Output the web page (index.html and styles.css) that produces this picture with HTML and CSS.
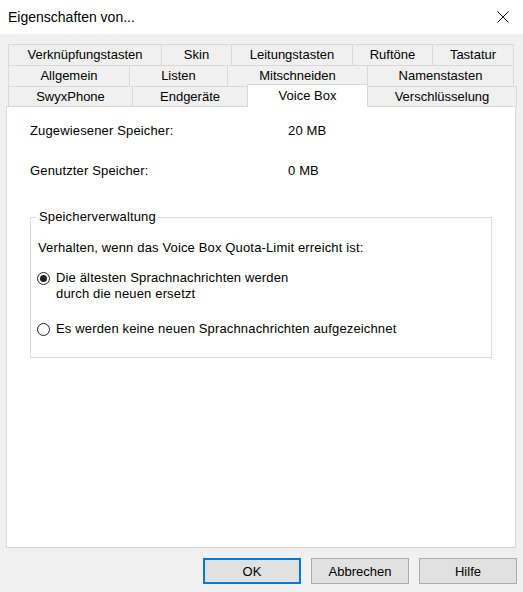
FILE: index.html
```html
<!DOCTYPE html>
<html lang="de">
<head>
    <meta charset="UTF-8">
    <meta name="viewport" content="width=device-width, initial-scale=1.0">
    <title>Eigenschaften von...</title>
    <link rel="stylesheet" href="styles.css">
</head>
<body>

<div class="titlebar">
    <span class="title">Eigenschaften von...</span>
    <svg class="close" width="12" height="12" viewBox="0 0 12 12">
        <path d="M0.5 0.5 L11.5 11.5 M11.5 0.5 L0.5 11.5" stroke="#000" stroke-width="1" fill="none"/>
    </svg>
</div>

<div class="tabs">
    <div class="tab-row row-1">
        <div class="tab">Verknüpfungstasten</div>
        <div class="tab">Skin</div>
        <div class="tab">Leitungstasten</div>
        <div class="tab">Ruftöne</div>
        <div class="tab">Tastatur</div>
    </div>
    <div class="tab-row row-2">
        <div class="tab">Allgemein</div>
        <div class="tab">Listen</div>
        <div class="tab">Mitschneiden</div>
        <div class="tab">Namenstasten</div>
    </div>
    <div class="tab-row row-3">
        <div class="tab">SwyxPhone</div>
        <div class="tab">Endgeräte</div>
        <div class="tab active">Voice Box</div>
        <div class="tab">Verschlüsselung</div>
    </div>
</div>

<div class="panel">
    <div class="info">
        <span>Zugewiesener Speicher:</span>
        <span>20 MB</span>
    </div>
    <div class="info second">
        <span>Genutzter Speicher:</span>
        <span>0 MB</span>
    </div>

    <fieldset class="group">
        <legend>Speicherverwaltung</legend>
        <div class="group-body">
            <p class="hint">Verhalten, wenn das Voice Box Quota-Limit erreicht ist:</p>
            <label class="radio first">
                <span class="dot checked"></span>
                <span>Die ältesten Sprachnachrichten werden<br>durch die neuen ersetzt</span>
            </label>
            <label class="radio">
                <span class="dot"></span>
                <span>Es werden keine neuen Sprachnachrichten aufgezeichnet</span>
            </label>
        </div>
    </fieldset>
</div>

<div class="buttons">
    <button class="default">OK</button>
    <button>Abbrechen</button>
    <button>Hilfe</button>
</div>

</body>
</html>
```

FILE: styles.css
```css
body {
    font-family: "Liberation Sans", Arial, sans-serif;
    font-size: 13px;
    line-height: 16px;
    color: #000;
    margin: 0;
    width: 523px;
    height: 592px;
    background: #f0f0f0;
    overflow: hidden;
}
.titlebar {
    height: 34px;
    background: white;
    display: flex;
    align-items: center;
    justify-content: space-between;
    padding: 0 14px 0 8px;
}
.title {
    font-size: 14px;
}
.tabs {
    margin: 10px 0 0 8px;
}
.tab-row {
    display: grid;
}
.row-1 {
    grid-template-columns: 154px 70px 121px 80px 81px;
    height: 21px;
}
.row-2 {
    grid-template-columns: 122px 98px 140px 146px;
    height: 21px;
}
.row-3 {
    grid-template-columns: 125px 115px 120px 149px;
    height: 20px;
}
.tab {
    box-sizing: border-box;
    border-top: 1px solid #d9d9d9;
    border-right: 1px solid #d9d9d9;
    text-align: center;
    display: flex;
    align-items: center;
    justify-content: center;
    white-space: nowrap;
}
.tab:first-child {
    border-left: 1px solid #d9d9d9;
}
.tab.active {
    position: relative;
    z-index: 1;
    background: white;
    border-left: 1px solid #d9d9d9;
    margin: -2px 0 -1px -1px;
}
.panel {
    box-sizing: border-box;
    margin-left: 6px;
    width: 510px;
    height: 442px;
    background: white;
    border: 1px solid #d9d9d9;
    border-bottom-color: #d2d2d2;
    padding: 16px 0 0 23px;
    letter-spacing: 0.15px;
}
.info {
    display: grid;
    grid-template-columns: 258px auto;
}
.info.second {
    margin-top: 24px;
}
.group {
    box-sizing: border-box;
    width: 462px;
    margin: 30px 0 0 0;
    padding: 15px 0 20px 5px;
    border: 1px solid #dcdcdc;
}
.group legend {
    padding: 0 2px 0 3px;
}
.group-body {
    padding-left: 2px;
}
.hint {
    margin: 0;
}
.radio {
    display: flex;
    align-items: flex-start;
    margin-top: 19px;
}
.radio.first {
    margin-top: 14px;
}
.dot {
    box-sizing: border-box;
    width: 13px;
    height: 13px;
    margin: 2px 6px 0 -1px;
    border: 1px solid #222;
    border-radius: 50%;
    display: flex;
    align-items: center;
    justify-content: center;
    flex-shrink: 0;
}
.dot.checked::after {
    content: "";
    width: 7px;
    height: 7px;
    border-radius: 50%;
    background: #222;
}
.buttons {
    display: flex;
    justify-content: flex-end;
    gap: 10px;
    padding-right: 6px;
    margin-top: 10px;
}
.buttons button {
    box-sizing: border-box;
    width: 98px;
    height: 26px;
    font-family: inherit;
    font-size: 13px;
    color: #000;
    background: #e1e1e1;
    border: 1px solid #adadad;
    padding: 0;
}
.buttons button.default {
    border: 2px solid #0078d7;
}
```
